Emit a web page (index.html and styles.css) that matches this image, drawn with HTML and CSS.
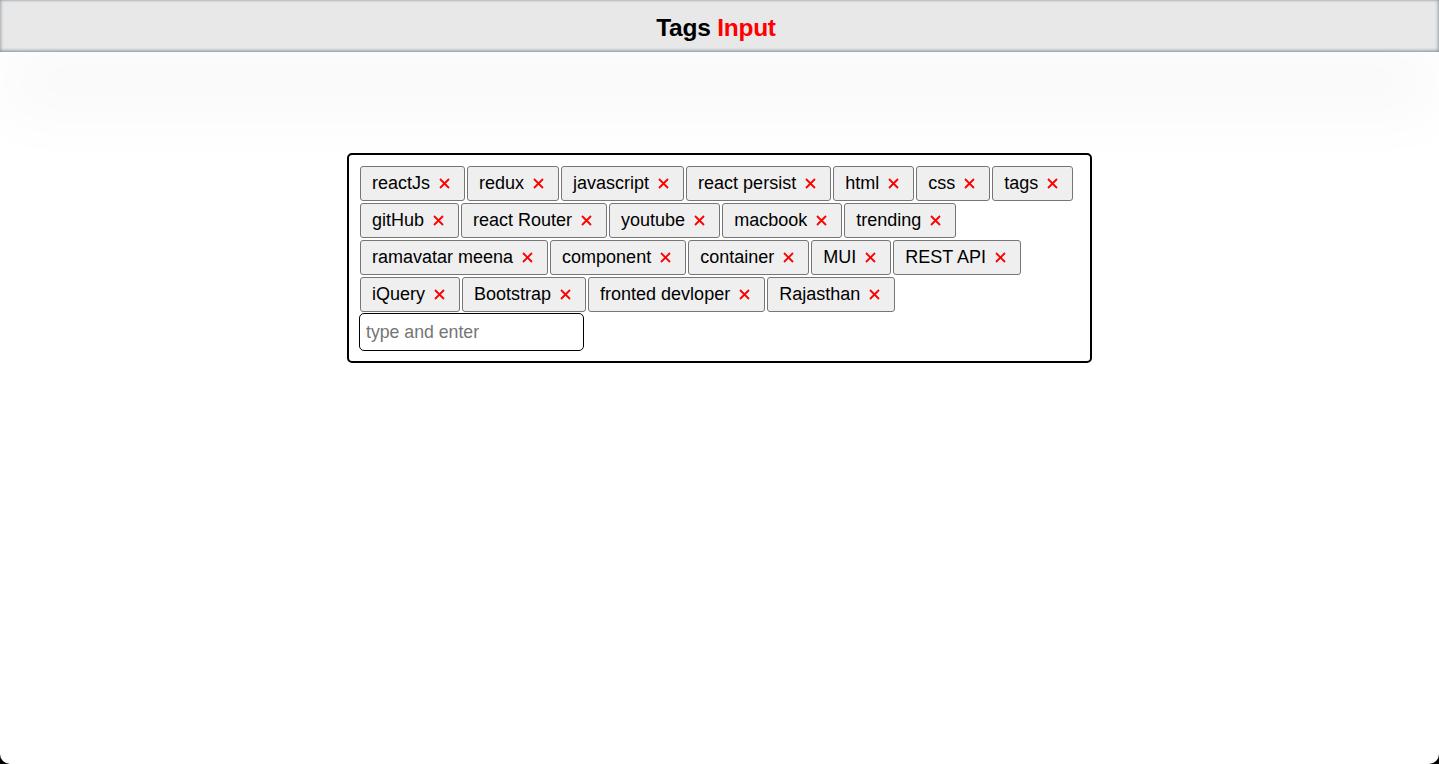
FILE: index.html
```html
<!DOCTYPE html>
<html lang="en">
<head>
<meta charset="utf-8">
<title>Tags Input</title>
<link rel="stylesheet" href="styles.css">
</head>
<body>
<div class="page">
  <header class="topbar">
    <h1 class="title">Tags <span class="accent">Input</span></h1>
  </header>
  <main class="main">
    <div class="tags-box">
      <div class="tag">reactJs<span class="remove"><svg viewBox="0 0 11 11"><path d="M1 1L10 10M10 1L1 10"/></svg></span></div>
      <div class="tag">redux<span class="remove"><svg viewBox="0 0 11 11"><path d="M1 1L10 10M10 1L1 10"/></svg></span></div>
      <div class="tag">javascript<span class="remove"><svg viewBox="0 0 11 11"><path d="M1 1L10 10M10 1L1 10"/></svg></span></div>
      <div class="tag">react persist<span class="remove"><svg viewBox="0 0 11 11"><path d="M1 1L10 10M10 1L1 10"/></svg></span></div>
      <div class="tag">html<span class="remove"><svg viewBox="0 0 11 11"><path d="M1 1L10 10M10 1L1 10"/></svg></span></div>
      <div class="tag">css<span class="remove"><svg viewBox="0 0 11 11"><path d="M1 1L10 10M10 1L1 10"/></svg></span></div>
      <div class="tag">tags<span class="remove"><svg viewBox="0 0 11 11"><path d="M1 1L10 10M10 1L1 10"/></svg></span></div>
      <div class="tag">gitHub<span class="remove"><svg viewBox="0 0 11 11"><path d="M1 1L10 10M10 1L1 10"/></svg></span></div>
      <div class="tag">react Router<span class="remove"><svg viewBox="0 0 11 11"><path d="M1 1L10 10M10 1L1 10"/></svg></span></div>
      <div class="tag">youtube<span class="remove"><svg viewBox="0 0 11 11"><path d="M1 1L10 10M10 1L1 10"/></svg></span></div>
      <div class="tag">macbook<span class="remove"><svg viewBox="0 0 11 11"><path d="M1 1L10 10M10 1L1 10"/></svg></span></div>
      <div class="tag">trending<span class="remove"><svg viewBox="0 0 11 11"><path d="M1 1L10 10M10 1L1 10"/></svg></span></div>
      <div class="tag">ramavatar meena<span class="remove"><svg viewBox="0 0 11 11"><path d="M1 1L10 10M10 1L1 10"/></svg></span></div>
      <div class="tag">component<span class="remove"><svg viewBox="0 0 11 11"><path d="M1 1L10 10M10 1L1 10"/></svg></span></div>
      <div class="tag">container<span class="remove"><svg viewBox="0 0 11 11"><path d="M1 1L10 10M10 1L1 10"/></svg></span></div>
      <div class="tag">MUI<span class="remove"><svg viewBox="0 0 11 11"><path d="M1 1L10 10M10 1L1 10"/></svg></span></div>
      <div class="tag">REST API<span class="remove"><svg viewBox="0 0 11 11"><path d="M1 1L10 10M10 1L1 10"/></svg></span></div>
      <div class="tag">iQuery<span class="remove"><svg viewBox="0 0 11 11"><path d="M1 1L10 10M10 1L1 10"/></svg></span></div>
      <div class="tag">Bootstrap<span class="remove"><svg viewBox="0 0 11 11"><path d="M1 1L10 10M10 1L1 10"/></svg></span></div>
      <div class="tag">fronted devloper<span class="remove"><svg viewBox="0 0 11 11"><path d="M1 1L10 10M10 1L1 10"/></svg></span></div>
      <div class="tag">Rajasthan<span class="remove"><svg viewBox="0 0 11 11"><path d="M1 1L10 10M10 1L1 10"/></svg></span></div>
      <input class="tag-input" type="text" placeholder="type and enter">
    </div>
  </main>
</div>
</body>
</html>
```

FILE: styles.css
```css
html {
  background: #000;
  height: 100%;
}
body {
  margin: 0;
  min-height: 100%;
  background: #fff;
  border-radius: 0 0 10px 10px;
  font-family: "Liberation Sans", Arial, sans-serif;
  color: #000;
}
.page {
  min-height: 764px;
}
.topbar {
  box-sizing: border-box;
  height: 52px;
  padding-top: 3px;
  padding-right: 7px;
  background: #e8e8e8;
  display: flex;
  align-items: center;
  justify-content: center;
  box-shadow:
    inset 0 -2px 3px rgba(60, 80, 100, 0.35),
    inset 2px 0 3px rgba(60, 80, 100, 0.15),
    inset -2px 0 3px rgba(60, 80, 100, 0.2),
    inset 0 1px 2px rgba(0, 0, 0, 0.1),
    0 55px 70px rgba(0, 0, 0, 0.04);
  position: relative;
}
.title {
  margin: 0;
  font-size: 24.5px;
  font-weight: bold;
  letter-spacing: -0.25px;
}
.accent {
  color: #ff0000;
}
.main {
  padding-top: 101px;
  display: flex;
  justify-content: center;
}
.tags-box {
  width: 721px;
  padding: 10px;
  border: 2px solid #000;
  border-radius: 5px;
  display: flex;
  flex-wrap: wrap;
  align-items: flex-start;
}
.tag {
  box-sizing: border-box;
  height: 35px;
  margin: 1px;
  padding: 0 11px;
  display: inline-flex;
  align-items: center;
  background: #efefef;
  border: 1px solid #767676;
  border-radius: 3px;
  font-size: 18px;
  white-space: nowrap;
}
.remove {
  display: inline-flex;
  margin-left: 9px;
  margin-right: 3px;
}
.remove svg {
  width: 11px;
  height: 11px;
  stroke: #ff0000;
  stroke-width: 1.8;
  fill: none;
}
.tag-input {
  box-sizing: border-box;
  width: 225px;
  height: 38px;
  margin: 0;
  padding: 0 6px;
  border: 1px solid #000;
  border-radius: 5px;
  font-family: "Liberation Sans", Arial, sans-serif;
  font-size: 17.7px;
  outline: none;
}
.tag-input::placeholder {
  color: #757575;
}
```
